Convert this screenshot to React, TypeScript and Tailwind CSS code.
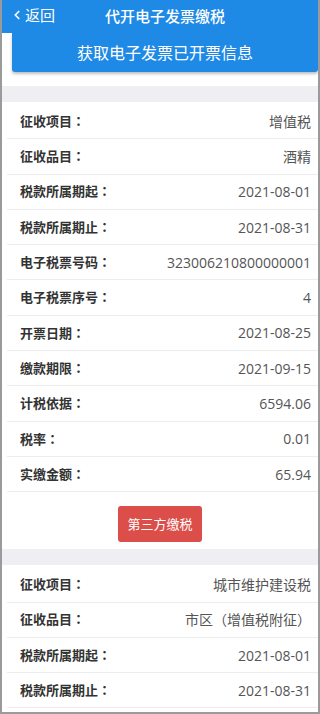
import React from 'react';
import { ChevronLeft } from 'lucide-react';

type Row = { label: string; value: string };

const firstTax: Row[] = [
  { label: '征收项目', value: '增值税' },
  { label: '征收品目', value: '酒精' },
  { label: '税款所属期起', value: '2021-08-01' },
  { label: '税款所属期止', value: '2021-08-31' },
  { label: '电子税票号码', value: '323006210800000001' },
  { label: '电子税票序号', value: '4' },
  { label: '开票日期', value: '2021-08-25' },
  { label: '缴款期限', value: '2021-09-15' },
  { label: '计税依据', value: '6594.06' },
  { label: '税率', value: '0.01' },
  { label: '实缴金额', value: '65.94' },
];

const secondTax: Row[] = [
  { label: '征收项目', value: '城市维护建设税' },
  { label: '征收品目', value: '市区（增值税附征）' },
  { label: '税款所属期起', value: '2021-08-01' },
  { label: '税款所属期止', value: '2021-08-31' },
];

function InfoRow({ row }: { row: Row }) {
  return (
    <div className="ml-[5px] h-[35.3px] pl-[13px] pr-[7px] flex items-center justify-between border-b border-[#ececec]">
      <span className="text-[13px] font-bold text-[#333]">
        {row.label}
        <span style={{ fontFamily: '"Noto Sans CJK TC", sans-serif' }}>：</span>
      </span>
      <span className="text-[14px] text-[#555]">{row.value}</span>
    </div>
  );
}

export default function App() {
  return (
    <div
      className="w-[320px] h-[714px] overflow-hidden bg-white border-x-2 border-b-2 border-[#9a9a9a]"
      style={{ fontFamily: '"Open Sans", "Noto Sans CJK SC", sans-serif' }}
    >
      {/* header */}
      <div className="h-[33px] bg-[#1f8ae6] relative flex items-center justify-center pl-[10px] text-white">
        <div className="absolute left-[8px] top-[4px] flex items-center text-[15px]">
          <ChevronLeft size={14} strokeWidth={3} />
          <span className="ml-[1px]">返回</span>
        </div>
        <span className="text-[15px] font-medium">代开电子发票缴税</span>
      </div>

      {/* fetch button */}
      <div className="ml-[10px] h-[39px] bg-[#1f8ae6] rounded-b-[3px] shadow-[0_2px_3px_rgba(0,0,0,0.25)] flex items-center justify-center">
        <span className="text-white text-[16px]">获取电子发票已开票信息</span>
      </div>

      <div className="mt-[14px] h-[16px] bg-[#efeff3]" />

      <div className="pt-[2px]">
        {firstTax.map((r) => (
          <InfoRow key={r.label} row={r} />
        ))}
      </div>

      <div className="flex justify-center mt-[14px]">
        <button className="w-[84px] h-[36px] rounded-[3px] bg-[#dc4e49] text-white text-[13px]">
          第三方缴税
        </button>
      </div>

      <div className="mt-[7px] h-[16px] bg-[#efeff3]" />

      <div className="pt-[2px]">
        {secondTax.map((r) => (
          <InfoRow key={r.label} row={r} />
        ))}
      </div>
    </div>
  );
}
